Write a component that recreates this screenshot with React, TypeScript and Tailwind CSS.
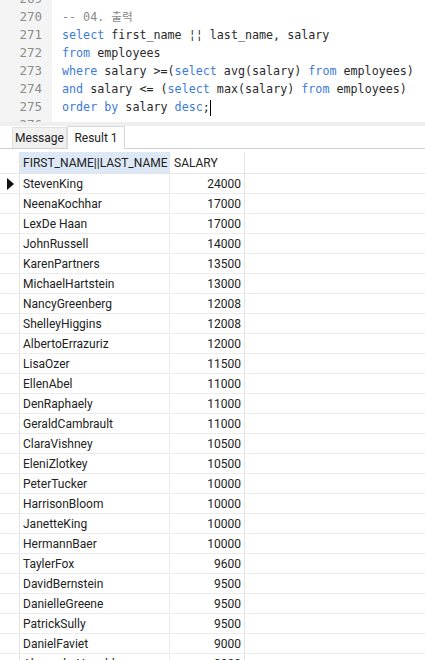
import React from "react";

const rows: [string, string][] = [
  ["StevenKing", "24000"],
  ["NeenaKochhar", "17000"],
  ["LexDe Haan", "17000"],
  ["JohnRussell", "14000"],
  ["KarenPartners", "13500"],
  ["MichaelHartstein", "13000"],
  ["NancyGreenberg", "12008"],
  ["ShelleyHiggins", "12008"],
  ["AlbertoErrazuriz", "12000"],
  ["LisaOzer", "11500"],
  ["EllenAbel", "11000"],
  ["DenRaphaely", "11000"],
  ["GeraldCambrault", "11000"],
  ["ClaraVishney", "10500"],
  ["EleniZlotkey", "10500"],
  ["PeterTucker", "10000"],
  ["HarrisonBloom", "10000"],
  ["JanetteKing", "10000"],
  ["HermannBaer", "10000"],
  ["TaylerFox", "9600"],
  ["DavidBernstein", "9500"],
  ["DanielleGreene", "9500"],
  ["PatrickSully", "9500"],
  ["DanielFaviet", "9000"],
  ["AlexanderHunold", "9000"],
];

const K = ({ children }: { children: React.ReactNode }) => (
  <span className="text-[#3d7bd6]">{children}</span>
);

const codeLines: [string, React.ReactNode][] = [
  ["269", <span />],
  ["270", <span className="text-[#8a8a8a]">-- 04. 출력</span>],
  [
    "271",
    <>
      <K>select</K> first_name ¦¦ last_name, salary
    </>,
  ],
  [
    "272",
    <>
      <K>from</K> employees
    </>,
  ],
  [
    "273",
    <>
      <K>where</K> salary &gt;=(<K>select</K> avg(salary) <K>from</K> employees)
    </>,
  ],
  [
    "274",
    <>
      <K>and</K> salary &lt;= (<K>select</K> max(salary) <K>from</K> employees)
    </>,
  ],
  [
    "275",
    <>
      <K>order</K> <K>by</K> salary <K>desc</K>;
      <span className="inline-block w-px h-[16px] bg-black align-middle" />
    </>,
  ],
  ["276", <span />],
];

export default function App() {
  return (
    <div className="w-[425px] h-[660px] overflow-hidden bg-white flex flex-col">
      {/* Editor */}
      <div className="h-[122px] overflow-hidden flex shrink-0">
        <div
          className="w-[52px] bg-[#f4f4f4] shrink-0 flex flex-col items-end pr-[10px] mt-[-10px]"
          style={{ fontFamily: "'DejaVu Sans Mono', monospace" }}
        >
          {codeLines.map(([n]) => (
            <div key={n} className="h-[18px] leading-[18px] text-[12.5px] text-[#8c8c8c]">
              {n}
            </div>
          ))}
        </div>
        <div
          className="flex-1 pl-[10px] mt-[-10px] text-[#2a2a2a] whitespace-pre"
          style={{ fontFamily: "'DejaVu Sans Mono', 'Noto Sans CJK KR', monospace" }}
        >
          {codeLines.map(([n, c]) => (
            <div key={n} className="h-[18px] leading-[18px] text-[11.7px]">
              {c}
            </div>
          ))}
        </div>
      </div>
      {/* separator */}
      <div className="h-[4px] bg-[#efefef] shrink-0" />
      {/* tabs */}
      <div
        className="h-[23px] flex items-end border-b border-[#cfcfcf] pl-[12px] shrink-0 text-[12px] text-[#222] whitespace-nowrap"
        style={{ fontFamily: "Roboto, sans-serif" }}
      >
        <div className="h-[21px] w-[55px] bg-[#f0f0f0] border border-b-0 border-[#e0e0e0] flex items-center justify-center">
          Message
        </div>
        <div className="h-[23px] w-[58px] bg-white border border-b-0 border-[#d8d8d8] flex items-start justify-center pt-[2px] mb-[-1px]">
          Result 1
        </div>
      </div>
      {/* grid */}
      <div
        className="pt-[3px] text-[12px] text-[#222] whitespace-nowrap"
        style={{ fontFamily: "Roboto, sans-serif" }}
      >
        <div className="flex h-[22px] border-b border-[#e6e6e6]">
          <div className="w-[20px] border-r border-[#e3e3e3]" />
          <div className="w-[150px] bg-[#dce8f5] border-r border-[#e3e3e3] pl-[3px] flex items-center overflow-hidden">
            FIRST_NAME||LAST_NAME
          </div>
          <div className="w-[75px] border-r border-[#e3e3e3] pl-[4px] flex items-center">
            SALARY
          </div>
        </div>
        {rows.map(([name, sal], i) => (
          <div key={i} className="flex h-[20px] border-b border-[#ececec]">
            <div className="w-[20px] border-r border-[#e3e3e3] flex items-center justify-center">
              {i === 0 && (
                <svg width="8" height="12" viewBox="0 0 8 12">
                  <path d="M1 0 L8 6 L1 12 Z" fill="#111" />
                </svg>
              )}
            </div>
            <div className="w-[150px] border-r border-[#ececec] pl-[3px] flex items-center">
              {name}
            </div>
            <div className="w-[75px] border-r border-[#e3e3e3] pr-[3px] flex items-center justify-end">
              {sal}
            </div>
          </div>
        ))}
      </div>
    </div>
  );
}
